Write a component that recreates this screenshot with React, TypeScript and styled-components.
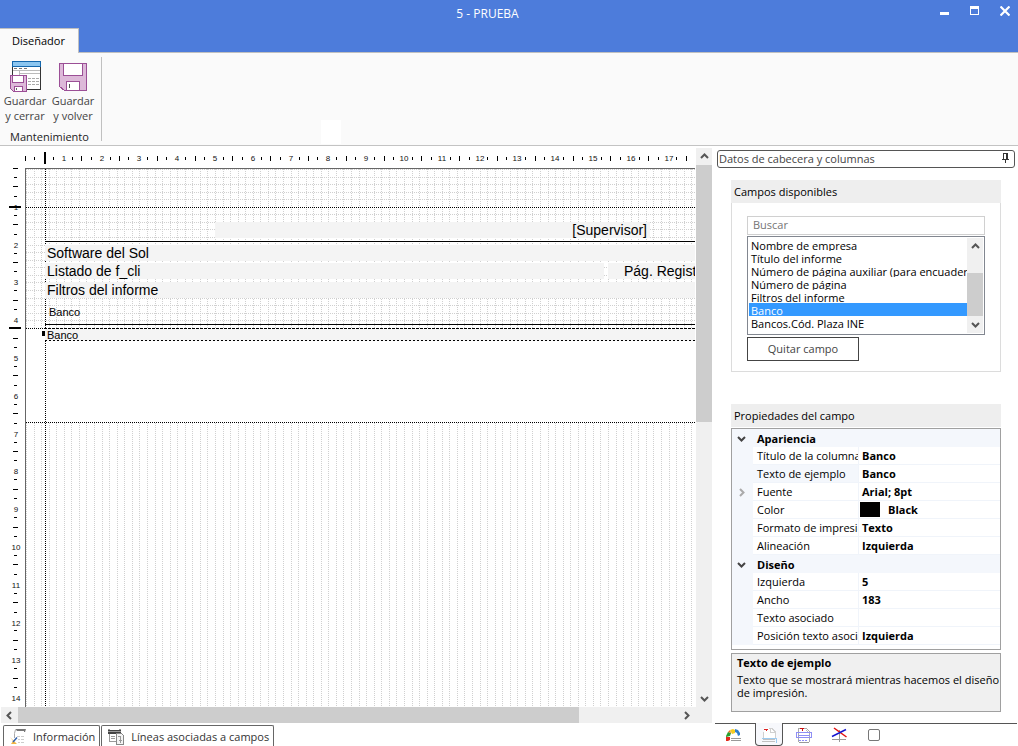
import React, { useEffect, useRef, useState } from "react";
import styled, { createGlobalStyle } from "styled-components";

const GlobalStyle = createGlobalStyle`
  *, *::before, *::after { box-sizing: border-box; }
  body {
    margin: 0;
    background: #fff;
    color: #000;
    font: 11px/15px "Open Sans", "Noto Sans", sans-serif;
  }
  button, input, select { font: inherit; color: inherit; }
`;

const Window = styled.div`
  display: flex;
  flex-direction: column;
  min-height: 100vh;
`;

/* ---------- title bar and ribbon ---------- */

const TitleBar = styled.header`
  display: grid;
  grid-template-columns: auto 1fr auto;
  grid-template-rows: 28px 24px;
  height: 53px;
  background: #4d7cdb;
  border-bottom: 1px solid #c0c0c0;
`;

const Title = styled.h1`
  grid-area: 1 / 1 / 2 / 4;
  margin: 0;
  padding-right: 43px;
  color: #fff;
  font-size: 12px;
  font-weight: 400;
  line-height: 27px;
  text-align: center;
`;

const WindowControls = styled.div`
  grid-area: 1 / 3 / 2 / 4;
  display: flex;
`;

const WindowButton = styled.button`
  width: 30px;
  height: 22px;
  padding: 0 8px 0 12px;
  border: 0;
  background: none;
  svg { display: block; }
`;

const RibbonTab = styled.button`
  grid-area: 2 / 1 / 3 / 2;
  width: 79px;
  height: 25px;
  padding: 0 1px 2px 0;
  border: solid #c0c0c0;
  border-width: 1px 1px 0 0;
  background: #fafafa;
  color: #000;
`;

const Ribbon = styled.div`
  display: flex;
  height: 93px;
  background: #fafafa;
  border-bottom: 1px solid #c3c3c3;
`;

const RibbonGroup = styled.section`
  display: flex;
  flex-direction: column;
  justify-content: space-between;
  width: 102px;
  margin: 4px 0;
  padding: 4px 3px 0 1px;
  border-right: 1px solid #c0c0c0;
`;

const RibbonButtons = styled.div`
  display: flex;
`;

const RibbonButton = styled.button`
  display: flex;
  flex-direction: column;
  align-items: center;
  width: 48px;
  padding: 0;
  border: 0;
  background: none;
  color: #444;
`;

const RibbonCaption = styled.h2`
  margin: 0 0 -3px;
  font-size: 11px;
  font-weight: 400;
  color: #222;
  text-align: center;
`;

const RibbonPatch = styled.div`
  align-self: flex-end;
  width: 20px;
  height: 24px;
  margin: 0 0 1px 219px;
  background: #fff;
`;

/* ---------- workspace ---------- */

const Workspace = styled.main`
  display: flex;
  flex: 1;
`;

const DesignPane = styled.section`
  display: flex;
  flex-direction: column;
  flex: 1;
  min-width: 0;
  padding: 2px 3px 0 0;
`;

const Surface = styled.div`
  display: grid;
  grid-template-columns: 25px minmax(0, 1fr) 17px;
  grid-template-rows: 20px minmax(0, 1fr);
  flex: 1;
`;

const TopRulerBox = styled.div`
  grid-area: 1 / 1 / 2 / 3;
  min-width: 0;
  svg { display: block; width: 100%; height: 20px; }
`;

const SideRulerBox = styled.div`
  grid-area: 2 / 1 / 3 / 2;
  position: relative;
  min-height: 0;
  svg { position: absolute; inset: 0; width: 25px; height: 100%; }
`;

const RulerText = styled.text`
  font: 8px "Liberation Sans", Arial, sans-serif;
  text-anchor: middle;
  fill: #111;
`;

const Canvas = styled.div`
  grid-area: 2 / 2 / 3 / 3;
  position: relative;
  overflow: hidden;
  border: solid #666;
  border-width: 1px 0 0 1px;
`;

const GridLines = styled.svg`
  position: absolute;
  inset: 0;
  width: 100%;
  height: 100%;
`;

type FieldProps = { $x: number; $y: number; $w?: number; $indent?: number; $small?: boolean; $plain?: boolean; $right?: boolean };

const Field = styled.div<FieldProps>`
  position: absolute;
  left: ${(p) => p.$x}px;
  top: ${(p) => p.$y}px;
  ${(p) => (p.$w ? `width: ${p.$w}px;` : "right: 0;")}
  height: ${(p) => (p.$small ? 12 : 16)}px;
  padding: 0 3px 0 ${(p) => p.$indent ?? 2}px;
  overflow: hidden;
  white-space: nowrap;
  text-align: ${(p) => (p.$right ? "right" : "left")};
  background: ${(p) => (p.$plain ? "transparent" : "#f4f4f4")};
  font: ${(p) => (p.$small ? "11px/12px" : "14px/17px")} "Liberation Sans", Arial, sans-serif;
`;

const SelectionFrame = styled.svg`
  position: absolute;
  left: 16px;
  top: 158px;
  width: 100%;
  height: 16px;
`;

/* ---------- scroll bars ---------- */

const ScrollBar = styled.div<{ $vertical?: boolean }>`
  display: flex;
  flex-direction: ${(p) => (p.$vertical ? "column" : "row")};
  background: #f0f0f0;
`;

const CanvasScroll = styled(ScrollBar)`
  grid-area: 1 / 3 / 3 / 4;
  margin-left: 1px;
`;

const BottomScroll = styled(ScrollBar)`
  height: 16px;
  margin-left: 1px;
  padding-right: 17px;
`;

const ArrowButton = styled.button<{ $vertical?: boolean }>`
  display: flex;
  align-items: center;
  justify-content: center;
  flex: none;
  width: ${(p) => (p.$vertical ? 16 : 17)}px;
  height: ${(p) => (p.$vertical ? 17 : 16)}px;
  padding: 0;
  border: 0;
  background: none;
`;

const Track = styled.div<{ $vertical?: boolean }>`
  display: flex;
  flex-direction: ${(p) => (p.$vertical ? "column" : "row")};
  flex: 1;
`;

const Thumb = styled.div<{ $size: number; $end?: boolean }>`
  flex: 0 0 ${(p) => p.$size}%;
  ${(p) => p.$end && "margin-top: auto;"}
  background: #cdcdcd;
`;

/* ---------- bottom tabs ---------- */

const SheetTabs = styled.nav`
  display: flex;
  gap: 1px;
  padding: 2px 3px 0;
`;

const SheetTab = styled.button`
  display: flex;
  align-items: center;
  gap: 6px;
  height: 21px;
  padding: 0 4px 0 6px;
  border: 1px solid #666;
  border-bottom: 0;
  border-radius: 2px 2px 0 0;
  background: #fff;
  color: #333;
  white-space: nowrap;
`;

/* ---------- side panel ---------- */

const SidePanel = styled.aside`
  display: flex;
  flex-direction: column;
  flex: none;
  width: 303px;
`;

const PanelTitle = styled.h2`
  display: flex;
  align-items: center;
  justify-content: space-between;
  height: 18px;
  margin: 4px 3px 0 2px;
  padding: 0 5px 2px 1px;
  border: 1px solid #555;
  border-radius: 3px;
  color: #444;
  font-size: 11px;
  font-weight: 400;
`;

const PinButton = styled.button`
  padding: 0;
  border: 0;
  background: none;
  svg { display: block; }
`;

const PanelBody = styled.div`
  flex: 1;
  padding: 12px 17px 11px 16px;
`;

const GroupTitle = styled.h3`
  margin: 0;
  padding-left: 3px;
  background: #eee;
  font-size: 11px;
  font-weight: 400;
  line-height: 23px;
`;

const FieldsGroup = styled.section`
  margin-bottom: 32px;
`;

const FieldsBody = styled.div`
  padding: 13px 15px 10px;
  border: 1px solid #dcdcdc;
  border-top: 0;
`;

const SearchBox = styled.input`
  display: block;
  width: 100%;
  height: 19px;
  padding: 0 5px 2px;
  border: 1px solid #d0d0d0;
  border-radius: 0;
  outline: 0;
  &::placeholder { color: #757575; opacity: 1; }
`;

const ListFrame = styled.div`
  display: flex;
  height: 99px;
  margin: 1px 0 2px;
  padding: 1px;
  border: 1px solid #828790;
`;

const FieldList = styled.select`
  flex: 1;
  min-width: 0;
  height: 95px;
  padding: 0;
  border: 0;
  outline: 0;
  overflow: hidden;
  background: #fff;
  scrollbar-width: none;
  option {
    height: 13px;
    min-height: 13px;
    padding: 0 2px;
    line-height: 12px;
    overflow: hidden;
  }
  option:checked {
    background: #3399ff linear-gradient(#3399ff, #3399ff);
    -webkit-text-fill-color: #fff;
  }
`;

const RemoveButton = styled.button`
  display: block;
  width: 112px;
  height: 24px;
  padding: 0 0 2px;
  border: 1px solid #444;
  background: #fff;
  color: #444;
`;

const PropertyFrame = styled.div`
  margin-top: 1px;
  padding-bottom: 4px;
  border: 1px solid #a0a0a0;
`;

const PropertyTable = styled.table`
  width: 100%;
  table-layout: fixed;
  border-collapse: separate;
  border-spacing: 0;
  line-height: 17px;
  col:nth-child(1) { width: 21px; }
  col:nth-child(2) { width: 106px; }
`;

const Gutter = styled.td`
  padding: 0 0 0 5px;
  background: #f4f7fc;
  button { display: block; padding: 0; border: 0; background: none; }
  svg { display: block; }
`;

const CategoryName = styled.th`
  height: 18px;
  padding: 0 4px;
  background: #f4f7fc;
  font-weight: 700;
  text-align: left;
`;

const PropertyName = styled.th<{ $active?: boolean }>`
  height: 18px;
  padding: 0 0 0 4px;
  border: solid #f0f4fa;
  border-width: 0 1px 1px 0;
  overflow: hidden;
  background: ${(p) => (p.$active ? "#f4f7fc" : "#fff")};
  font-weight: 400;
  text-align: left;
  white-space: nowrap;
`;

const PropertyValue = styled.td`
  padding: 0 3px;
  border-bottom: 1px solid #f0f4fa;
  font-weight: 700;
`;

const ColorValue = styled.span`
  display: flex;
  align-items: center;
  gap: 8px;
  margin-left: -2px;
`;

const Swatch = styled.span`
  width: 20px;
  height: 15px;
  background: #000;
`;

const HelpBox = styled.div`
  height: 59px;
  margin-top: 3px;
  padding: 1px 0 1px 5px;
  border: 1px solid #a0a0a0;
  background: #f0f0f0;
  line-height: 13px;
  white-space: nowrap;
  h4 { margin: 0 0 3px; font-size: 11px; line-height: 15px; }
  p { margin: 0; }
`;

const PanelTabs = styled.nav`
  display: flex;
  height: 23px;
  padding-left: 1px;
  border-top: 1px solid #555;
  margin-right: 1px;
`;

const PanelTab = styled.button<{ $active?: boolean }>`
  display: flex;
  align-items: center;
  justify-content: center;
  width: ${(p) => (p.$active ? 28 : 35)}px;
  height: 23px;
  margin: ${(p) => (p.$active ? "-1px 3px 0 4px" : "-1px 0 0")};
  padding: 1px 0 0;
  border: solid ${(p) => (p.$active ? "#555" : "transparent")};
  border-width: 0 1px 1px;
  border-radius: 0 0 4px 4px;
  background: ${(p) => (p.$active ? "#f7f8fc" : "none")};
`;

/* ---------- drawings ---------- */

const arrows = {
  up: "M1 6 4.5 2.5 8 6",
  down: "M1 3 4.5 6.5 8 3",
  left: "M6 1 2.5 4.5 6 8",
  right: "M3 1 6.5 4.5 3 8",
};

const Chevron = ({ dir, color = "#555" }: { dir: keyof typeof arrows; color?: string }) => (
  <svg width="9" height="9" viewBox="0 0 9 9" fill="none" stroke={color} strokeWidth="2" aria-hidden="true">
    <path d={arrows[dir]} />
  </svg>
);

const SaveCloseIcon = () => (
  <svg width="32" height="32" viewBox="-1 0 32 32" shapeRendering="crispEdges" aria-hidden="true">
    <path d="M2.5 .5h28v28h-28z" fill="#fff" stroke="#333" />
    <path d="M2.5 .5h28v5h-28z" fill="#8cc6f0" stroke="#1467ad" />
    <path d="M4 7.5h3m2 0h3m2 0h3" stroke="#777" fill="none" />
    <path d="M3 9.5h27M9 12.5h21M9.5 9v5" stroke="#bbb" fill="none" />
    <path d="M18 17.5h3m1 0h3m1 0h3M18 20.5h3m1 0h3m1 0h3M18 23.5h3m1 0h3m1 0h3" stroke="#aaa" fill="none" />
    <path d="M.5 14.5h16v16h-13l-3-3z" fill="#ddb9d9" stroke="#9b4f96" />
    <path d="M2.5 14.5h11v7h-11zM4.5 25.5h8v5h-8z" fill="#fff" stroke="#9b4f96" />
    <path d="M6.5 27v2" stroke="#666" />
  </svg>
);

const SaveBackIcon = () => (
  <svg width="32" height="32" viewBox="0 0 32 32" shapeRendering="crispEdges" aria-hidden="true">
    <path d="M2.5 2.5h27v27h-22l-5-4z" fill="#ddb9d9" stroke="#9b4f96" />
    <path d="M6.5 2.5h19v12h-19zM9.5 20.5h13v9h-13z" fill="#fff" stroke="#9b4f96" />
    <path d="M12.5 23v4" stroke="#555" />
  </svg>
);

const PinIcon = () => (
  <svg width="7" height="10" viewBox="0 0 7 10" fill="none" stroke="#333" shapeRendering="crispEdges" aria-hidden="true">
    <path d="M1.5 6V.5h4V6M4.5 0v6M0 6.5h7M3.5 6v4" />
  </svg>
);

const InfoIcon = () => (
  <svg width="17" height="17" viewBox="0 0 17 17" aria-hidden="true">
    <path d="M5.500 1h10.500l-1 3h-1V3H7z" fill="#777" />
    <path d="M5.500 1.500Q4 5 4.500 10" fill="none" stroke="#aaa" />
    <path d="M7 8.500h3m1 0h3M8 11.500h2m1 0h3M8 14.500h2m1 0h3" stroke="#ccc" fill="none" />
    <path d="M0 9l7 7H1l2-3z" fill="#f3b545" />
    <path d="M3 14 7 9.500" stroke="#2f5fa8" strokeWidth="1.500" />
  </svg>
);

const LinesIcon = () => (
  <svg width="17" height="17" viewBox="0 0 17 17" shapeRendering="crispEdges" aria-hidden="true">
    <path d="M0 2h13v4H0z" fill="#444" />
    <path d="M0 1h2v1H0zM11 1h2v1h-2zM0 3h13v1H0z" fill="#999" />
    <path d="M1.500 6v7h6M3 8.500h4M3 10.500h4" stroke="#999" fill="none" />
    <path d="M8.500 5.500h5l2 2v9h-7z" fill="#f4f4f4" stroke="#888" />
    <path d="M10 8.500h3M12.500 9v3M11 12.500h3M12.500 12v3" stroke="#999" />
  </svg>
);

const GaugeIcon = () => (
  <svg width="16" height="16" viewBox="0 0 16 16" aria-hidden="true">
    <path d="M0 10h4v3l-2 1H0z" fill="#e3291b" />
    <path d="M0 9 2 5l3 1-1 3-4 1z" fill="#27a02c" />
    <path d="M2 5l2-2 1 3z" fill="#e8701c" />
    <path d="M4 3l3-1 2 1v3L6 7z" fill="#f4cc22" />
    <path d="M9 2l3 1 2 3v2l-2 1-1-3-2-1z" fill="#2f80cf" />
    <path d="M5 11.500h10M5 13.500h10" stroke="#999" />
  </svg>
);

const HeaderIcon = () => (
  <svg width="16" height="16" viewBox="0 0 16 16" shapeRendering="crispEdges" aria-hidden="true">
    <path d="M3 1h7l4 4v6H2z" fill="#fff" />
    <path d="M8 1.500h3l3 3v6M9.500 2v3h4M2.500 5v6" stroke="#d0d0d0" fill="none" />
    <path d="M3 2h4v1H6v1H5V3H3z" fill="#d22" />
    <path d="M1 11.500h15M15.500 12v4" stroke="#9ccbf0" />
    <path d="M2 12h12v1H2zM1 14h13v1H1z" fill="#c0c0c0" />
  </svg>
);

const BodyIcon = () => (
  <svg width="16" height="16" viewBox="0 0 16 16" shapeRendering="crispEdges" fill="none" aria-hidden="true">
    <path d="M2.500 15V1.500h8l3 3V15" stroke="#aaa" fill="#fff" />
    <path d="M4 1h4v1H7v2H6V2H4z" fill="#c11" />
    <path d="M9 4l2-2 1 3z" fill="#bbb" />
    <path d="M.5 5.500h15v5H.5zM2 8.500h12" stroke="#8f8ff5" />
    <path d="M3 13.500h2m1 0h2m1 0h2" stroke="#8f8ff5" />
    <path d="M3 15.500h10" stroke="#999" />
  </svg>
);

const AxesIcon = () => (
  <svg width="16" height="16" viewBox="0 0 16 16" fill="none" aria-hidden="true">
    <path d="M8.500 3v12M1 12.500h14" stroke="#999" />
    <path d="M3 1 15.500 10" stroke="#e01010" strokeWidth="1.500" />
    <path d="M15 2.500 1 9.500" stroke="#1414d0" strokeWidth="1.500" />
  </svg>
);

const SquareIcon = () => (
  <svg width="12" height="12" viewBox="0 0 12 12" aria-hidden="true">
    <rect x=".5" y=".5" width="11" height="11" rx="1.500" fill="#fff" stroke="#777" />
  </svg>
);

/* ---------- rulers and grid ---------- */

const CM = 96 / 2.54;
const STEP = CM / 5;
const range = (n: number) => Array.from({ length: n }, (_, i) => i);
const HEADER_END = 159;
const BODY_END = 253;

/* Number of quarter-centimetre marks that fit the ruler's present length. */
function useMarks(side: "width" | "height", origin: number) {
  const ref = useRef<HTMLDivElement>(null);
  const [marks, setMarks] = useState(0);
  useEffect(() => {
    const box = ref.current;
    if (!box) return;
    const measure = () => {
      const length = box.getBoundingClientRect()[side];
      setMarks(Math.max(0, Math.floor(((length - origin - 2) / CM) * 4) + 1));
    };
    measure();
    const observer = new ResizeObserver(measure);
    observer.observe(box);
    return () => observer.disconnect();
  }, [side, origin]);
  return [ref, range(marks)] as const;
}

const HorizontalRuler = () => {
  const [ref, marks] = useMarks("width", 26);
  return (
    <TopRulerBox ref={ref}>
      <svg shapeRendering="crispEdges" aria-hidden="true">
        {marks.map((q) => {
          if (q > 0 && q % 4 === 0) {
            return <RulerText key={q} x={Math.round(26 + (q / 4) * CM)} y={13}>{q / 4}</RulerText>;
          }
          const x = Math.floor(25 + (q / 4) * CM);
          const tall = q % 2 === 0;
          return q === 2 ? (
            <rect key={q} x={44} y={4} width={2} height={12} />
          ) : (
            <rect key={q} x={x} y={tall ? 8 : 9} width={1} height={tall ? 5 : 3} />
          );
        })}
      </svg>
    </TopRulerBox>
  );
};

const VerticalRuler = () => {
  const [ref, marks] = useMarks("height", 2);
  return (
    <SideRulerBox ref={ref}>
      <svg shapeRendering="crispEdges" aria-hidden="true">
        {marks.map((q) => {
          if (q > 0 && q % 4 === 0) {
            return <RulerText key={q} x={16} y={Math.round((q / 4) * CM) + 4}>{q / 4}</RulerText>;
          }
          const wide = q % 2 === 0;
          return <rect key={q} x={wide ? 13 : 14} y={Math.floor((q / 4) * CM)} width={wide ? 5 : 3} height={1} />;
        })}
        <rect x={9} y={38} width={12} height={2} />
        <rect x={9} y={159} width={12} height={2} />
      </svg>
    </SideRulerBox>
  );
};

const PageGrid = () => (
  <GridLines shapeRendering="crispEdges" aria-hidden="true">
    <g stroke="#d0d0d0" strokeDasharray="1 1">
      {range(300).map((i) => {
        const x = Math.round(i * STEP) + 0.5;
        return (
          <React.Fragment key={i}>
            <line x1={x} x2={x} y1={0} y2={HEADER_END} />
            <line x1={x} x2={x} y1={BODY_END + 1} y2="100%" />
          </React.Fragment>
        );
      })}
      {range(21).map((i) => {
        const y = Math.round(i * STEP) + 0.5;
        return <line key={i} x1={0} x2="100%" y1={y} y2={y} />;
      })}
    </g>
    <g stroke="#000" strokeDasharray="1 1">
      <line x1={19.5} x2={19.5} y1={0} y2="100%" />
      <line x1={0} x2="100%" y1={38.5} y2={38.5} />
      <line x1={0} x2="100%" y1={159.5} y2={159.5} />
      <line x1={0} x2="100%" y1={253.5} y2={253.5} />
    </g>
    <g stroke="#000">
      <line x1={19} x2="100%" y1={72.5} y2={72.5} />
      <line x1={19} x2="100%" y1={155.5} y2={155.5} />
    </g>
  </GridLines>
);

/* ---------- data ---------- */

const availableFields = [
  "Nombre de empresa",
  "Título del informe",
  "Número de página auxiliar (para encuadernar)",
  "Número de página",
  "Filtros del informe",
  "Banco",
  "Bancos.Cód. Plaza INE",
];

type Property = { name: string; value: string; active?: boolean; expandable?: boolean; swatch?: boolean };

const categories: { title: string; items: Property[] }[] = [
  {
    title: "Apariencia",
    items: [
      { name: "Título de la columna", value: "Banco" },
      { name: "Texto de ejemplo", value: "Banco", active: true },
      { name: "Fuente", value: "Arial; 8pt", expandable: true },
      { name: "Color", value: "Black", swatch: true },
      { name: "Formato de impresión", value: "Texto" },
      { name: "Alineación", value: "Izquierda" },
    ],
  },
  {
    title: "Diseño",
    items: [
      { name: "Izquierda", value: "5" },
      { name: "Ancho", value: "183" },
      { name: "Texto asociado", value: "" },
      { name: "Posición texto asociado", value: "Izquierda" },
    ],
  },
];

export default function App() {
  return (
    <Window>
      <GlobalStyle />
      <TitleBar>
        <Title>5 - PRUEBA</Title>
        <WindowControls>
          <WindowButton aria-label="Minimizar">
            <svg width="10" height="10" shapeRendering="crispEdges"><path d="M0 6h9v3H0z" fill="#fff" /></svg>
          </WindowButton>
          <WindowButton aria-label="Maximizar">
            <svg width="10" height="10" shapeRendering="crispEdges"><path d="M0 0h9v9H0zM1 3v5h7V3z" fill="#fff" fillRule="evenodd" /></svg>
          </WindowButton>
          <WindowButton aria-label="Cerrar">
            <svg width="10" height="10"><path d="M.5 .5l9 9M9.500 .5l-9 9" stroke="#fff" strokeWidth="2.200" /></svg>
          </WindowButton>
        </WindowControls>
        <RibbonTab>Diseñador</RibbonTab>
      </TitleBar>

      <Ribbon>
        <RibbonGroup>
          <RibbonButtons>
            <RibbonButton><SaveCloseIcon />Guardar<br />y cerrar</RibbonButton>
            <RibbonButton><SaveBackIcon />Guardar<br />y volver</RibbonButton>
          </RibbonButtons>
          <RibbonCaption>Mantenimiento</RibbonCaption>
        </RibbonGroup>
        <RibbonPatch />
      </Ribbon>

      <Workspace>
        <DesignPane>
          <Surface>
            <HorizontalRuler />
            <VerticalRuler />
            <Canvas>
              <PageGrid />
              <Field $x={189} $y={53} $w={435} $right>[Supervisor]</Field>
              <Field $x={19} $y={76}>Software del Sol</Field>
              <Field $x={19} $y={94} $w={559}>Listado de f_cli</Field>
              <Field $x={582} $y={94} $indent={16}>Pág. Registro</Field>
              <Field $x={19} $y={113}>Filtros del informe</Field>
              <Field $x={21} $y={137} $small $plain>Banco</Field>
              <Field $x={19} $y={160} $small>Banco</Field>
              <SelectionFrame shapeRendering="crispEdges" aria-hidden="true">
                <rect x={0} y={4} width={3} height={5} />
                <g stroke="#000" strokeDasharray="2 2">
                  <line x1={3} x2="100%" y1={1.5} y2={1.5} />
                  <line x1={3} x2="100%" y1={13.5} y2={13.5} />
                </g>
              </SelectionFrame>
            </Canvas>
            <CanvasScroll $vertical>
              <ArrowButton $vertical aria-label="Subir"><Chevron dir="up" /></ArrowButton>
              <Track $vertical><Thumb $size={49} /></Track>
              <ArrowButton $vertical aria-label="Bajar"><Chevron dir="down" /></ArrowButton>
            </CanvasScroll>
          </Surface>
          <BottomScroll>
            <ArrowButton aria-label="Izquierda"><Chevron dir="left" /></ArrowButton>
            <Track><Thumb $size={85} /></Track>
            <ArrowButton aria-label="Derecha"><Chevron dir="right" /></ArrowButton>
          </BottomScroll>
          <SheetTabs>
            <SheetTab><InfoIcon />Información</SheetTab>
            <SheetTab><LinesIcon />Líneas asociadas a campos</SheetTab>
          </SheetTabs>
        </DesignPane>

        <SidePanel>
          <PanelTitle>
            Datos de cabecera y columnas
            <PinButton aria-label="Anclar"><PinIcon /></PinButton>
          </PanelTitle>
          <PanelBody>
            <FieldsGroup>
              <GroupTitle>Campos disponibles</GroupTitle>
              <FieldsBody>
                <SearchBox type="text" placeholder="Buscar" aria-label="Buscar" />
                <ListFrame>
                  <FieldList size={7} defaultValue="Banco" aria-label="Campos disponibles">
                    {availableFields.map((name) => (
                      <option key={name} value={name}>{name}</option>
                    ))}
                  </FieldList>
                  <ScrollBar $vertical>
                    <ArrowButton $vertical aria-label="Subir"><Chevron dir="up" /></ArrowButton>
                    <Track $vertical><Thumb $size={70} $end /></Track>
                    <ArrowButton $vertical aria-label="Bajar"><Chevron dir="down" /></ArrowButton>
                  </ScrollBar>
                </ListFrame>
                <RemoveButton>Quitar campo</RemoveButton>
              </FieldsBody>
            </FieldsGroup>

            <GroupTitle>Propiedades del campo</GroupTitle>
            <PropertyFrame>
              <PropertyTable>
                <colgroup><col /><col /><col /></colgroup>
                {categories.map((category) => (
                  <tbody key={category.title}>
                    <tr>
                      <Gutter><button aria-label="Contraer"><Chevron dir="down" color="#444" /></button></Gutter>
                      <CategoryName colSpan={2}>{category.title}</CategoryName>
                    </tr>
                    {category.items.map((item) => (
                      <tr key={item.name}>
                        <Gutter>
                          {item.expandable && (
                            <button aria-label="Expandir"><Chevron dir="right" color="#aaa" /></button>
                          )}
                        </Gutter>
                        <PropertyName scope="row" $active={item.active}>{item.name}</PropertyName>
                        <PropertyValue>
                          {item.swatch ? <ColorValue><Swatch />{item.value}</ColorValue> : item.value}
                        </PropertyValue>
                      </tr>
                    ))}
                  </tbody>
                ))}
              </PropertyTable>
            </PropertyFrame>
            <HelpBox>
              <h4>Texto de ejemplo</h4>
              <p>Texto que se mostrará mientras hacemos el diseño<br />de impresión.</p>
            </HelpBox>
          </PanelBody>
          <PanelTabs>
            <PanelTab aria-label="Colores"><GaugeIcon /></PanelTab>
            <PanelTab $active aria-label="Cabecera"><HeaderIcon /></PanelTab>
            <PanelTab aria-label="Cuerpo"><BodyIcon /></PanelTab>
            <PanelTab aria-label="Ejes"><AxesIcon /></PanelTab>
            <PanelTab aria-label="Marco"><SquareIcon /></PanelTab>
          </PanelTabs>
        </SidePanel>
      </Workspace>
    </Window>
  );
}
